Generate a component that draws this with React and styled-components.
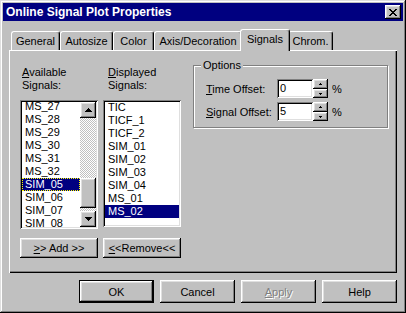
import React from 'react';
import styled, { createGlobalStyle } from 'styled-components';

const GlobalStyle = createGlobalStyle`
  body {
    margin: 0;
    background: #c0c0c0;
    font-family: "Liberation Sans", Arial, sans-serif;
    font-size: 11px;
    color: #000;
  }
`;

const raised = `
  box-shadow: inset -1px -1px #000, inset 1px 1px #fff, inset -2px -2px #808080, inset 2px 2px #dfdfdf;
`;
const sunken = `
  box-shadow: inset 1px 1px #808080, inset -1px -1px #fff, inset 2px 2px #000, inset -2px -2px #dfdfdf;
`;

const Window = styled.div`
  width: 406px;
  height: 313px;
  box-sizing: border-box;
  padding: 3px;
  background: #c0c0c0;
  box-shadow: inset -1px -1px #000, inset 1px 1px #dfdfdf, inset -2px -2px #808080, inset 2px 2px #fff;
  display: flex;
  flex-direction: column;
`;
const TitleBar = styled.div`
  height: 18px;
  flex: 0 0 18px;
  background: #000080;
  color: #fff;
  display: flex;
  align-items: center;
  justify-content: space-between;
  padding: 0 2px 0 3px;
  font-weight: bold;
  font-size: 12px;
  line-height: 18px;
`;
const CloseButton = styled.div`
  width: 16px;
  height: 14px;
  background: #c0c0c0;
  ${raised};
  display: flex;
  align-items: center;
  justify-content: center;
`;
const Body = styled.div`
  padding: 8px 6px 0;
  display: flex;
  flex-direction: column;
`;
const TabRow = styled.div`
  display: flex;
  align-items: flex-end;
  height: 21px;
  padding-left: 2px;
  position: relative;
  z-index: 1;
`;
const Tab = styled.div`
  box-sizing: border-box;
  width: ${p => p.w}px;
  height: ${p => (p.active ? 22 : 19)}px;
  margin: ${p => (p.active ? '0 -2px -1px' : '0')};
  background: #c0c0c0;
  border-left: 1px solid #fff;
  border-top: 1px solid #fff;
  border-right: 1px solid #000;
  border-radius: 3px 3px 0 0;
  box-shadow: inset -1px 0 #808080;
  padding-top: 3px;
  line-height: 13px;
  text-align: center;
  white-space: nowrap;
  position: relative;
  z-index: ${p => (p.active ? 2 : 1)};
`;
const Panel = styled.div`
  box-sizing: border-box;
  height: 223px;
  box-shadow: inset 1px 1px #fff, inset -1px -1px #000, inset -2px -2px #808080;
  display: flex;
  align-items: flex-start;
  padding: 9px 0 0 11px;
`;
const SignalGrid = styled.div`
  display: grid;
  grid-template-columns: 78px 78px;
  column-gap: 5px;
  row-gap: 8px;
  margin-top: 7px;
`;
const FieldLabel = styled.div`
  line-height: 13px;
  padding-left: ${p => p.indent}px;
`;
const ListBox = styled.div`
  box-sizing: border-box;
  height: ${p => p.h}px;
  background: #fff;
  ${sunken};
  padding: 2px;
  display: flex;
  overflow: hidden;
`;
const Items = styled.div`
  flex: 1;
  overflow: hidden;
  margin-top: -${p => p.scrolled}px;
`;
const Item = styled.div`
  height: 13px;
  line-height: 13px;
  padding-left: 3px;
  white-space: nowrap;
  background: ${p => (p.selected ? '#000080' : 'transparent')};
  color: ${p => (p.selected ? '#fff' : '#000')};
  outline: ${p => (p.focused ? '1px dotted #ffff00' : 'none')};
  outline-offset: -1px;
`;
const ScrollBar = styled.div`
  width: 16px;
  display: flex;
  flex-direction: column;
`;
const ArrowButton = styled.div`
  height: 16px;
  background: #c0c0c0;
  ${raised};
  display: flex;
  align-items: center;
  justify-content: center;
`;
const Track = styled.div`
  height: ${p => p.h}px;
  background: repeating-conic-gradient(#fff 0 25%, #c0c0c0 0 50%) 0 0 / 2px 2px;
`;
const Thumb = styled.div`
  height: ${p => p.h}px;
  background: #c0c0c0;
  ${raised};
`;
const PushButton = styled.button`
  box-sizing: border-box;
  height: 20px;
  margin-top: 1px;
  padding: 0;
  border: none;
  background: #c0c0c0;
  ${raised};
  font: inherit;
  color: #000;
  white-space: nowrap;
`;
const Group = styled.fieldset`
  box-sizing: border-box;
  width: 195px;
  margin: 0 0 0 12px;
  padding: 0 0 6px;
  min-width: 0;
  border: 1px solid #808080;
  box-shadow: inset 1px 1px #fff, 1px 1px #fff;
`;
const Legend = styled.legend`
  margin-left: 7px;
  padding: 0 2px;
  line-height: 13px;
  background: #c0c0c0;
`;
const GroupBody = styled.div`
  display: flex;
  flex-direction: column;
  gap: 4px;
  padding: 7px 0 0 12px;
`;
const OptionRow = styled.div`
  display: flex;
  align-items: center;
  height: 19px;
`;
const OptionLabel = styled.div`
  width: 71px;
  white-space: nowrap;
`;
const NumberField = styled.div`
  box-sizing: border-box;
  width: 36px;
  height: 19px;
  background: #fff;
  ${sunken};
  padding: 2px 0 0 3px;
  line-height: 15px;
`;
const Spinner = styled.div`
  width: 15px;
  height: 19px;
  display: flex;
  flex-direction: column;
`;
const SpinButton = styled.div`
  height: ${p => p.h}px;
  background: #c0c0c0;
  ${raised};
  display: flex;
  align-items: center;
  justify-content: center;
`;
const Unit = styled.span`
  margin-left: 4px;
`;
const Footer = styled.div`
  display: flex;
  justify-content: flex-end;
  gap: 6px;
  margin-top: 7px;
`;
const DialogButton = styled.button`
  box-sizing: border-box;
  width: 75px;
  height: 23px;
  padding: 0;
  border: none;
  background: #c0c0c0;
  font: inherit;
  color: ${p => (p.disabled ? '#808080' : '#000')};
  text-shadow: ${p => (p.disabled ? '1px 1px #fff' : 'none')};
  box-shadow: ${p =>
    p.isDefault
      ? 'inset 0 0 0 1px #000, inset -2px -2px #000, inset 2px 2px #fff, inset -3px -3px #808080, inset 3px 3px #dfdfdf'
      : 'inset -1px -1px #000, inset 1px 1px #fff, inset -2px -2px #808080, inset 2px 2px #dfdfdf'};
`;
const Flip = styled.svg`
  display: block;
  transform: ${p => (p.down ? 'scaleY(-1)' : 'none')};
`;

// win95 close "X", drawn pixel by pixel
const CloseGlyph = () => {
  const rows = ['11....11', '.11..11.', '..1111..', '...11...', '..1111..', '.11..11.', '11....11'];
  return (
    <svg width="8" height="7" viewBox="0 0 8 7" shapeRendering="crispEdges">
      {rows.map((r, y) =>
        r.split('').map((c, x) => (c === '1' ? <rect key={`${x}-${y}`} x={x} y={y} width="1" height="1" fill="#000" /> : null))
      )}
    </svg>
  );
};

const Arrow = ({ down }) => (
  <Flip down={down} width="7" height="4" viewBox="0 0 7 4" shapeRendering="crispEdges">
    <path d="M3 0h1v1h1v1h1v1h1v1H0V3h1V2h1V1h1z" fill="#000" />
  </Flip>
);

const SmallArrow = ({ down }) => (
  <Flip down={down} width="3" height="2" viewBox="0 0 3 2" shapeRendering="crispEdges">
    <path d="M1 0h1v1h1v1H0V1h1z" fill="#000" />
  </Flip>
);

const Spin = () => (
  <Spinner>
    <SpinButton h={10}>
      <SmallArrow />
    </SpinButton>
    <SpinButton h={9}>
      <SmallArrow down />
    </SpinButton>
  </Spinner>
);

const tabs = [
  { label: 'General', w: 49 },
  { label: 'Autosize', w: 53 },
  { label: 'Color', w: 41 },
  { label: 'Axis/Decoration', w: 88 },
  { label: 'Signals', w: 50, active: true },
  { label: 'Chrom.', w: 45 },
];

const available = ['MS_27', 'MS_28', 'MS_29', 'MS_30', 'MS_31', 'MS_32', 'SIM_05', 'SIM_06', 'SIM_07', 'SIM_08'];
const displayed = ['TIC', 'TICF_1', 'TICF_2', 'SIM_01', 'SIM_02', 'SIM_03', 'SIM_04', 'MS_01', 'MS_02'];

const App = () => {
  return (
    <Window>
      <GlobalStyle />
      <TitleBar>
        <span>Online Signal Plot Properties</span>
        <CloseButton>
          <CloseGlyph />
        </CloseButton>
      </TitleBar>
      <Body>
        <TabRow>
          {tabs.map(t => (
            <Tab key={t.label} w={t.w} active={t.active}>
              {t.label}
            </Tab>
          ))}
        </TabRow>
        <Panel>
          <SignalGrid>
            <FieldLabel indent={2}>
              <u>A</u>vailable
              <br />
              Signals:
            </FieldLabel>
            <FieldLabel indent={5}>
              <u>D</u>isplayed
              <br />
              Signals:
            </FieldLabel>
            <ListBox h={129}>
              <Items scrolled={2}>
                {available.map(s => (
                  <Item key={s} selected={s === 'SIM_05'} focused={s === 'SIM_05'}>
                    {s}
                  </Item>
                ))}
              </Items>
              <ScrollBar>
                <ArrowButton>
                  <Arrow />
                </ArrowButton>
                <Track h={60} />
                <Thumb h={30} />
                <Track h={3} />
                <ArrowButton>
                  <Arrow down />
                </ArrowButton>
              </ScrollBar>
            </ListBox>
            <ListBox h={127}>
              <Items scrolled={1}>
                {displayed.map(s => (
                  <Item key={s} selected={s === 'MS_02'}>
                    {s}
                  </Item>
                ))}
              </Items>
            </ListBox>
            <PushButton>
              <u>&gt;</u>&gt; Add &gt;&gt;
            </PushButton>
            <PushButton>
              <u>&lt;</u>&lt;Remove&lt;&lt;
            </PushButton>
          </SignalGrid>
          <Group>
            <Legend>Options</Legend>
            <GroupBody>
              <OptionRow>
                <OptionLabel>
                  <u>T</u>ime Offset:
                </OptionLabel>
                <NumberField>0</NumberField>
                <Spin />
                <Unit>%</Unit>
              </OptionRow>
              <OptionRow>
                <OptionLabel>
                  <u>S</u>ignal Offset:
                </OptionLabel>
                <NumberField>5</NumberField>
                <Spin />
                <Unit>%</Unit>
              </OptionRow>
            </GroupBody>
          </Group>
        </Panel>
        <Footer>
          <DialogButton isDefault>OK</DialogButton>
          <DialogButton>Cancel</DialogButton>
          <DialogButton disabled>
            <u>A</u>pply
          </DialogButton>
          <DialogButton>Help</DialogButton>
        </Footer>
      </Body>
    </Window>
  );
};

export default App;
